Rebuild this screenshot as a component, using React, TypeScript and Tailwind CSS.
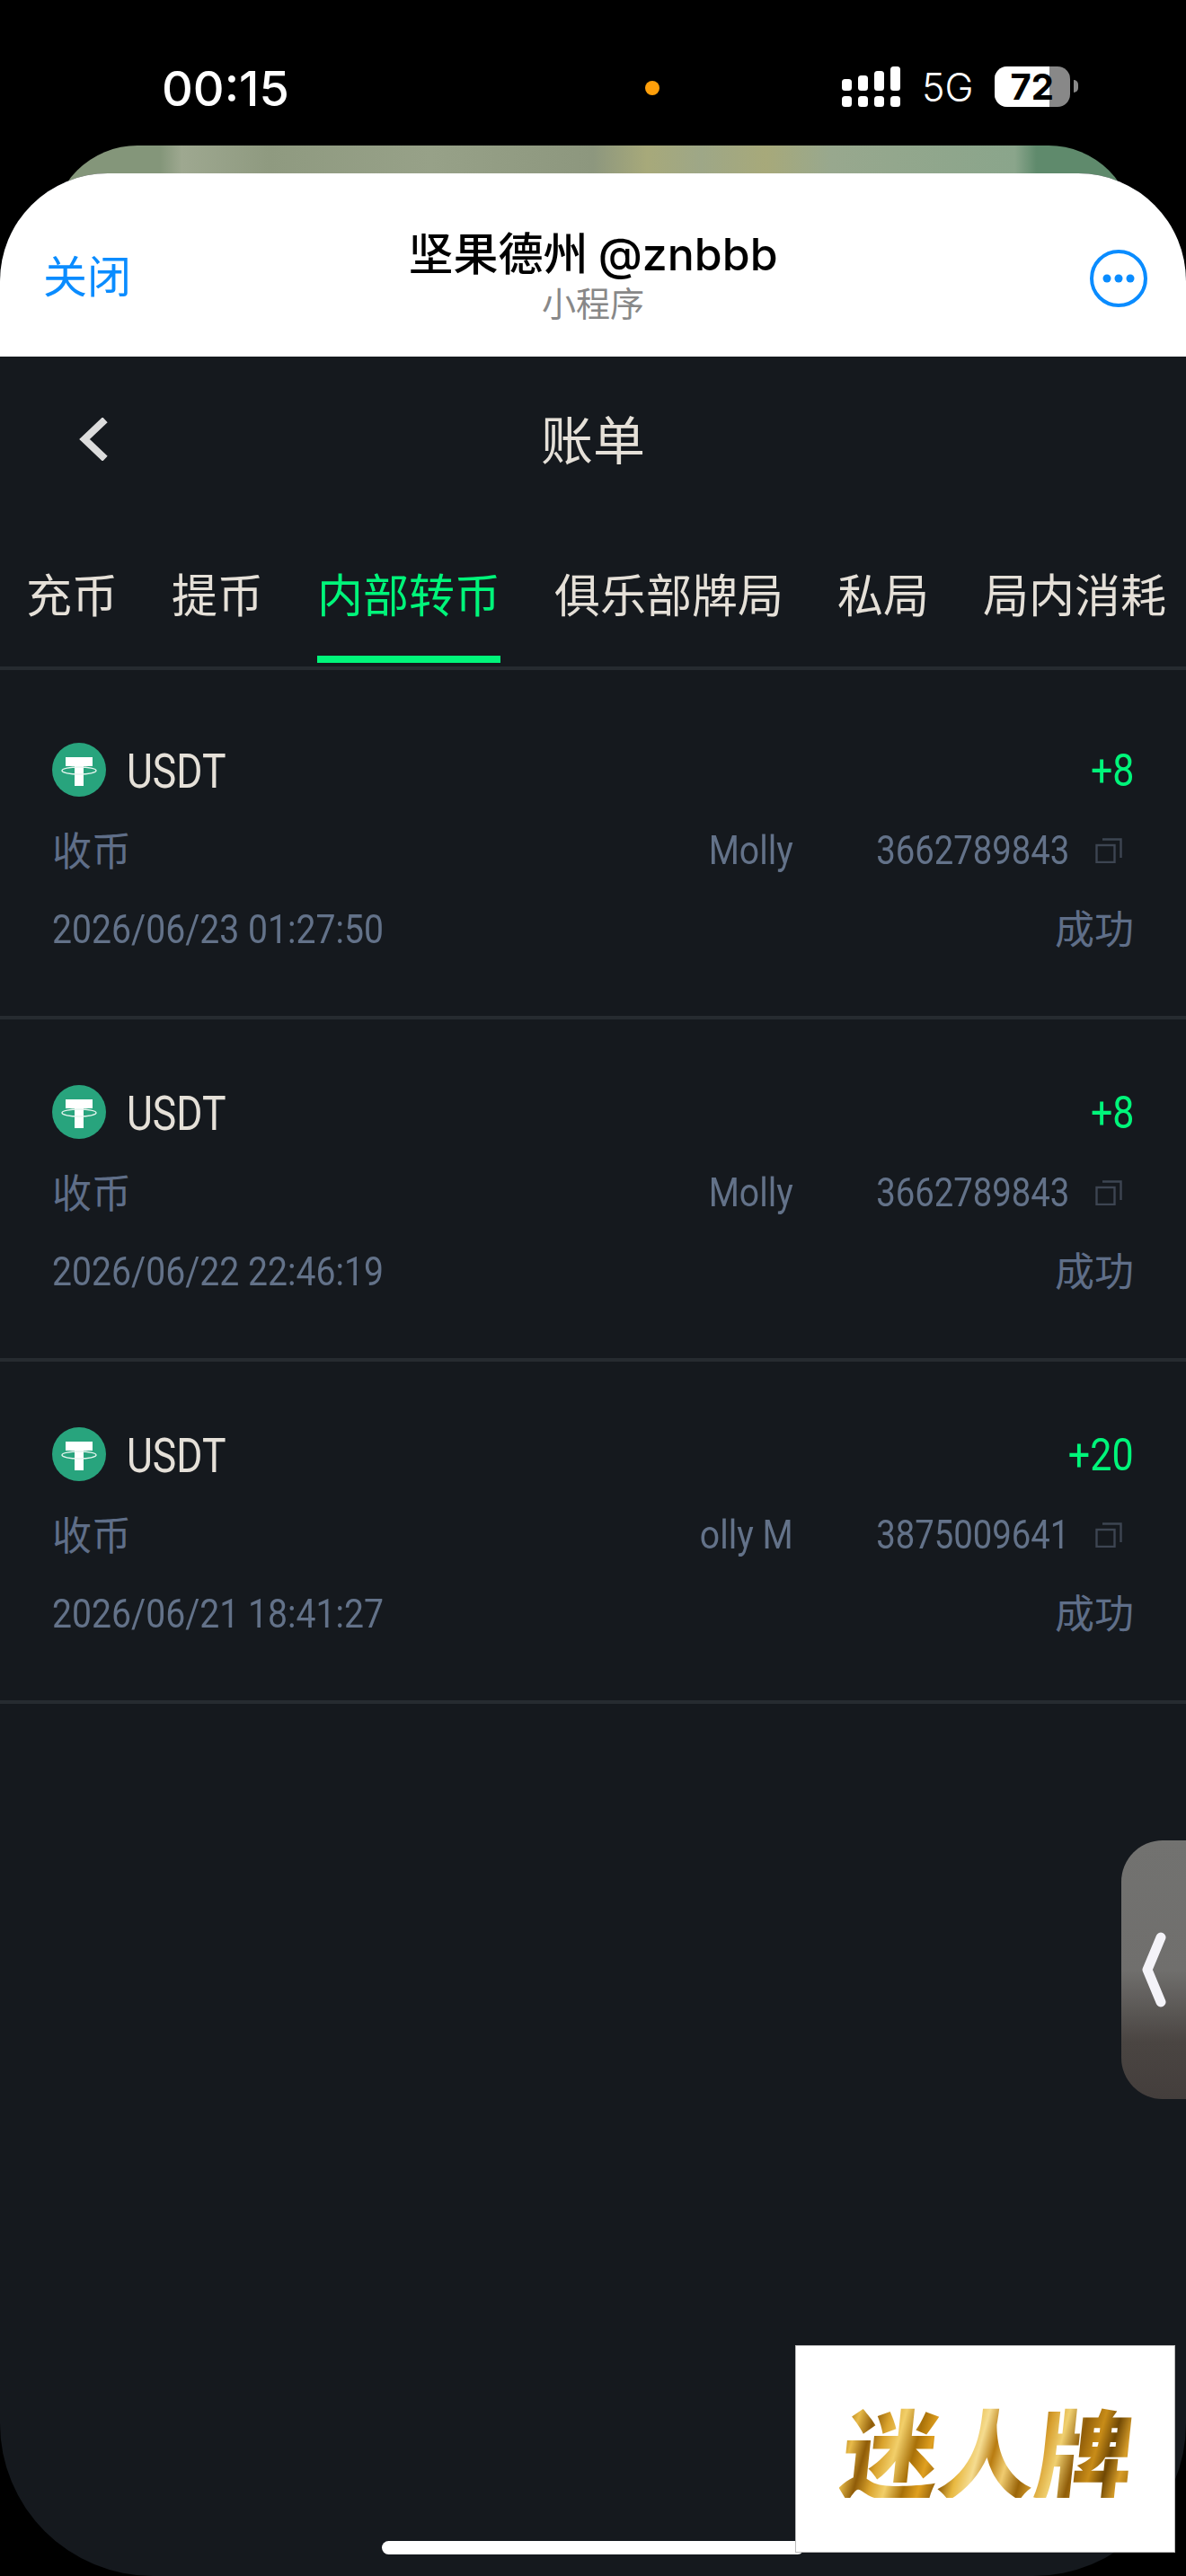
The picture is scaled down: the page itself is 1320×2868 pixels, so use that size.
import React from 'react'

const cjk = "font-['Noto_Sans_CJK_SC',sans-serif]"
const roboto = "inline-block font-['Roboto',sans-serif]"

const tabs = [
  { label: '充币', active: false },
  { label: '提币', active: false },
  { label: '内部转币', active: true },
  { label: '俱乐部牌局', active: false },
  { label: '私局', active: false },
  { label: '局内消耗', active: false },
]

const rows = [
  { amount: '+8', name: 'Molly', id: '3662789843', time: '2026/06/23 01:27:50' },
  { amount: '+8', name: 'Molly', id: '3662789843', time: '2026/06/22 22:46:19' },
  { amount: '+20', name: 'olly M', id: '3875009641', time: '2026/06/21 18:41:27' },
]

const TetherIcon = () => (
  <svg width="60" height="60" viewBox="0 0 60 60" className="shrink-0">
    <circle cx="30" cy="30" r="30" fill="#28a47d" />
    <rect x="15" y="16" width="30" height="10" fill="#fff" />
    <rect x="25" y="16" width="10" height="32" fill="#fff" />
    <ellipse cx="30" cy="31" rx="19" ry="4" fill="none" stroke="#e6f5ef" strokeWidth="1.400" />
  </svg>
)

const CopyIcon = () => (
  <svg width="30" height="28" viewBox="0 0 30 28" fill="none" stroke="#3d4552" strokeWidth="2.400" className="shrink-0">
    <rect x="1.500" y="8" width="20" height="19" />
    <path d="M8 1.500h20.500V22" />
  </svg>
)

export default function App() {
  return (
    <div className={`relative w-[1320px] h-[2868px] overflow-hidden bg-black ${cjk}`}>
      {/* status bar */}
      <div className="relative z-20 flex h-[193px] items-start pt-[74px] pl-[180px] text-white">
        <span className="mt-[1px] font-['Inter',sans-serif] text-[54px] leading-[48px] font-medium">00:15</span>
        <span className="ml-[396px] mt-[16px] size-[16px] rounded-full bg-[#ff9f0a]" />
        <div className="ml-[203px] flex">
          <svg width="66" height="46" viewBox="0 0 66 46" fill="#fff">
            <rect x="0" y="14" width="11" height="13" rx="3.500" />
            <rect x="18" y="10" width="11" height="17" rx="3.500" />
            <rect x="36" y="5" width="11" height="22" rx="3.500" />
            <rect x="54" y="0" width="11" height="27" rx="3.500" />
            <rect x="0" y="33" width="11" height="12" rx="3.500" />
            <rect x="18" y="33" width="11" height="12" rx="3.500" />
            <rect x="36" y="33" width="11" height="12" rx="3.500" />
            <rect x="54" y="33" width="11" height="12" rx="3.500" />
          </svg>
          <span className="ml-[23px] font-['Inter',sans-serif] text-[43px] leading-[46px] font-light">5G</span>
          <div className="relative ml-[24px] h-[45px] w-[84px] rounded-[14px] bg-[#888]">
            <div className="h-full w-[61px] rounded-l-[14px] bg-white" />
            <span className="absolute left-[17px] top-0 font-['Inter',sans-serif] text-[40px] leading-[45px] font-bold text-black">72</span>
          </div>
          <div className="ml-[4px] mt-[15px] h-[14px] w-[5px] rounded-r-full bg-[#888]" />
        </div>
      </div>

      {/* card peeking behind the sheet */}
      <div className="absolute left-[58px] top-[162px] h-[120px] w-[1204px] rounded-t-[95px] bg-[linear-gradient(90deg,#84967a_0%,#84967a_10%,#9ea890_12%,#8f9a80_20%,#97a188_35%,#8d977e_50%,#a7a97a_55%,#9ea787_60%,#a7a97a_66%,#98a88e_72%,#8aa58b_89%,#5f8a6c_91%,#5f8a6c_100%)]" />

      {/* sheet */}
      <div className="relative z-10 flex h-[2675px] flex-col overflow-hidden rounded-t-[120px] rounded-b-[170px] bg-[#15191e]">
        <div className="relative flex h-[204px] shrink-0 items-start bg-white">
          <span className="mt-[84px] ml-[48px] text-[49px] leading-[56px] text-[#0a8cff]">关闭</span>
          <div className="absolute inset-x-0 top-[55px] flex flex-col items-center">
            <span className="text-[50px] leading-[62px] font-medium text-black">坚果德州 <span className="font-['Inter',sans-serif]">@znbbb</span></span>
            <span className="text-[38px] leading-[44px] text-[#888]">小程序</span>
          </div>
          <svg width="64" height="64" viewBox="0 0 64 64" className="absolute right-[43px] top-[85px]">
            <circle cx="32" cy="32" r="30" fill="none" stroke="#0a8cff" strokeWidth="4" />
            <circle cx="19" cy="32" r="4.500" fill="#0a8cff" />
            <circle cx="32" cy="32" r="4.500" fill="#0a8cff" />
            <circle cx="45" cy="32" r="4.500" fill="#0a8cff" />
          </svg>
        </div>

        {/* nav bar */}
        <div className="relative flex h-[186px] shrink-0 items-start justify-center pt-[61px]">
          <svg width="34" height="48" viewBox="0 0 34 48" fill="none" className="absolute left-[86px] top-[68px]">
            <path d="M28 5L8 24l20 19" stroke="#dcdcdc" strokeWidth="8" strokeLinecap="square" />
          </svg>
          <span className="text-[58px] leading-none text-[#e5e0d8]">账单</span>
        </div>

        {/* tabs */}
        <div className="flex h-[163px] shrink-0 gap-[60px] border-b-4 border-[#262b30] pl-[29px]">
          {tabs.map((tab) => (
            <div key={tab.label} className="relative h-[159px] shrink-0">
              <span className={`mt-[48px] block text-[51px] leading-[58px] ${tab.active ? 'text-[#00f57a]' : 'text-[#e5e0d8]'}`}>
                {tab.label}
              </span>
              {tab.active && <div className="absolute inset-x-0 bottom-[4px] h-[8px] bg-[#00f57a]" />}
            </div>
          ))}
        </div>

        {/* records */}
        <div className="flex flex-col pt-[8px]">
          {rows.map((row) => (
            <div key={row.time} className="flex h-[381px] shrink-0 flex-col border-b-4 border-[#262b30] pl-[58px] pr-[58px] pt-[73px]">
              <div className="flex h-[60px] items-center">
                <TetherIcon />
                <span className={`${roboto} mt-[5px] ml-[23px] origin-left scale-x-[0.84] text-[53px] text-[#e5e0d8]`}>USDT</span>
                <span className={`${roboto} mt-[3px] ml-auto origin-right scale-x-[0.86] text-[50px] text-[#00f57a]`}>{row.amount}</span>
              </div>
              <div className="mt-[30px] flex h-[60px] items-center text-[#637289]">
                <span className="mt-[-4px] text-[44px] text-[#5f6e88]">收币</span>
                <span className={`${roboto} ml-auto origin-right scale-x-[0.89] text-[44px]`}>{row.name}</span>
                <span className={`${roboto} ml-[60px] origin-right scale-x-[0.87] text-[44px]`}>{row.id}</span>
                <span className="ml-[29px] mr-[13px]"><CopyIcon /></span>
              </div>
              <div className="mt-[27px] flex h-[60px] items-center text-[#637289]">
                <span className={`${roboto} mt-[1px] origin-left scale-x-[0.89] text-[44px]`}>{row.time}</span>
                <span className="mt-[-4px] ml-auto text-[44px] text-[#5f6e88]">成功</span>
              </div>
            </div>
          ))}
        </div>
      </div>

      {/* floating pull tab */}
      <div className="absolute right-0 top-[2049px] z-20 h-[288px] w-[72px] rounded-l-[46px] bg-[linear-gradient(180deg,#727270_0%,#706f6d_50%,#4a4542_78%,#443e3c_100%)]">
        <svg width="30" height="84" viewBox="0 0 30 84" fill="none" className="absolute left-[22px] top-[102px]">
          <path d="M22 6L7 42l15 36" stroke="#f4f3f8" strokeWidth="11" strokeLinecap="round" strokeLinejoin="round" />
        </svg>
      </div>

      {/* home indicator */}
      <div className="absolute left-[425px] top-[2829px] z-20 h-[15px] w-[470px] rounded-full bg-white" />

      {/* ad sticker */}
      <div className="absolute left-[885px] top-[2611px] z-30 flex h-[231px] w-[423px] items-center justify-center border border-[#bbb] bg-white pl-[8px]">
        <span className="-skew-x-6 bg-[linear-gradient(100deg,#a06a08_0%,#e8bb4a_5%,#8f5c08_10%,#d9a22c_15%,#f2cf6a_20%,#a87008_26%,#e0a020_31%,#8a5806_37%,#e8b840_42%,#f5dc90_47%,#b87b10_52%,#f0cc70_57%,#9a6408_63%,#d8a030_68%,#f0d070_73%,#8f5c08_79%,#c88c18_85%,#704804_90%,#d89e2a_95%,#a06a08_100%)] bg-clip-text text-[108px] leading-none font-black text-transparent">
          迷人牌
        </span>
      </div>
    </div>
  )
}
